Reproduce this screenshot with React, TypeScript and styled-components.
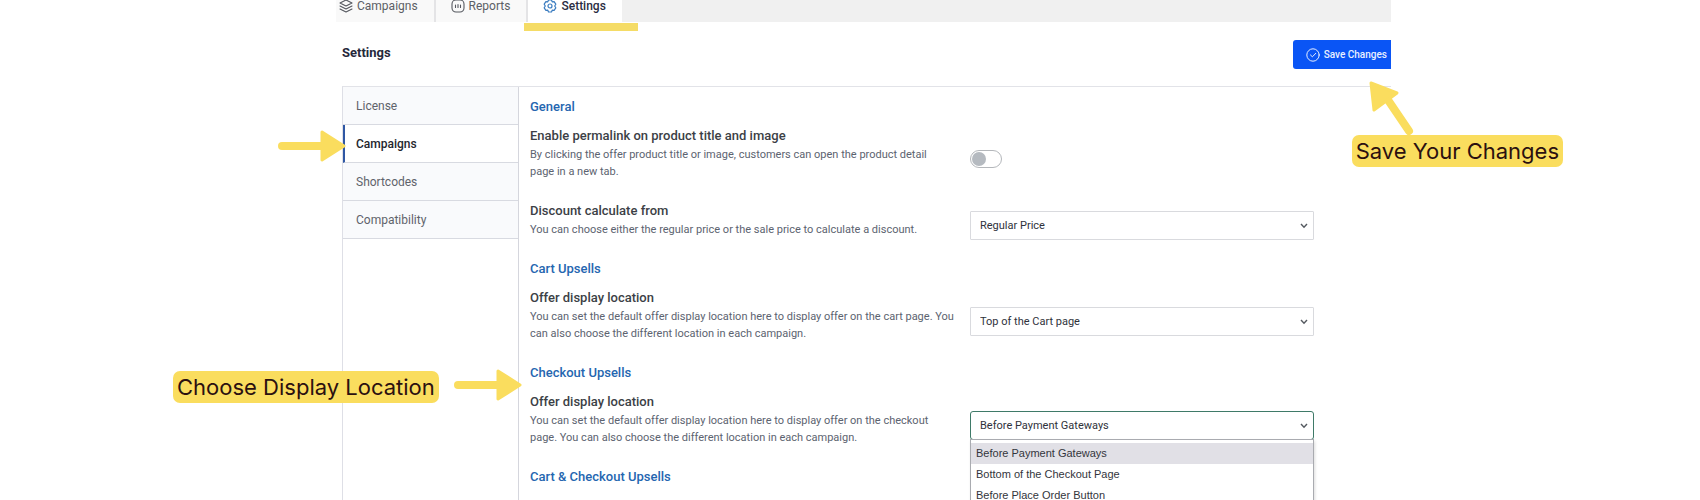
import React from "react";
import styled, { createGlobalStyle } from "styled-components";

const GlobalStyle = createGlobalStyle`
  * { box-sizing: border-box; }
  body { margin: 0; background: #fff; font-family: Roboto, "Liberation Sans", sans-serif; }
  h1, h2, h3, p, ul { margin: 0; padding: 0; }
`;

const Page = styled.main`
  height: 100vh;
  overflow: hidden;
  background: #fff;
`;

const Frame = styled.div`
  display: flow-root;
  position: relative;
  margin: 0 309px 0 336px;
`;

const TabBar = styled.nav`
  display: flex;
  height: 32px;
  margin-top: -10px;
  background: #f0f0f0;
`;

const Tab = styled.a<{ $active?: boolean; $first?: boolean }>`
  display: flex;
  align-items: center;
  gap: 4px;
  padding: 0 16px 0 ${(p) => (p.$first ? 3 : 15)}px;
  border-right: 2px solid ${(p) => (p.$active ? "#f0f0f0" : "#e4e4e6")};
  background: ${(p) => (p.$active ? "#fff" : "#f9f9f9")};
  color: ${(p) => (p.$active ? "#2b2d42" : "#5c5f66")};
  font-size: 12px;
  font-weight: ${(p) => (p.$active ? 500 : 400)};
  text-decoration: none;
  svg { color: ${(p) => (p.$active ? "#3a7cc0" : "#55585f")}; }
`;

const Header = styled.header`
  display: flex;
  align-items: center;
  justify-content: space-between;
  padding: 18px 0 17px 6px;
`;

const PageTitle = styled.h1`
  padding-bottom: 3px;
  color: #26283a;
  font-size: 13px;
  line-height: 20px;
  font-weight: 700;
`;

const SaveButton = styled.button`
  display: flex;
  align-items: center;
  gap: 4px;
  height: 29px;
  padding: 0 4px 0 13px;
  border: 0;
  border-radius: 3px 0 0 3px;
  background: #0a55f5;
  color: #e8f0ff;
  font: 500 10px Roboto, sans-serif;
`;

const Panel = styled.div`
  display: flex;
  margin-left: 6px;
  border-top: 1px solid #e2e3e8;
  border-left: 1px solid #dedfe6;
`;

const Sidebar = styled.nav`
  flex: none;
  width: 175px;
`;

const SideLink = styled.a<{ $active?: boolean }>`
  display: flex;
  align-items: center;
  height: 38px;
  padding-left: ${(p) => (p.$active ? 11 : 13)}px;
  border-left: ${(p) => (p.$active ? "2px solid #2f57a4" : "0")};
  border-bottom: 1px solid #d8dae1;
  background: ${(p) => (p.$active ? "#fff" : "#f9fafc")};
  color: ${(p) => (p.$active ? "#24262e" : "#5f636b")};
  font-size: 12px;
  font-weight: ${(p) => (p.$active ? 500 : 400)};
  text-decoration: none;
`;

const Content = styled.div`
  display: flex;
  flex: 1;
  flex-direction: column;
  gap: 9px;
  padding: 10px 77px 0 11px;
  border-left: 1px solid #d5d6dd;
`;

const SectionTitle = styled.h2`
  color: #2566b0;
  font-size: 13px;
  line-height: 20px;
  font-weight: 500;
`;

const SettingRow = styled.div`
  display: grid;
  grid-template-columns: minmax(0, 1fr) 344px;
  align-items: center;
`;

const SettingText = styled.div`
  padding-bottom: 12px;
`;

const SettingTitle = styled.h3`
  color: #3c3f46;
  font-size: 13px;
  line-height: 20px;
  font-weight: 500;
`;

const SettingNote = styled.p`
  color: #5c6370;
  font-size: 11px;
  line-height: 17px;
  white-space: pre-line;
`;

const Toggle = styled.input`
  appearance: none;
  display: block;
  width: 32px;
  height: 18px;
  margin: 0;
  padding: 1px;
  border: 1px solid #b4b7bb;
  border-radius: 9px;
  background: #fff;
  &::before {
    content: "";
    display: block;
    width: 14px;
    height: 14px;
    border-radius: 50%;
    background: #b5bac0;
  }
  &:checked::before { margin-left: auto; background: #0a55f5; }
`;

const SelectBox = styled.div`
  position: relative;
`;

const Select = styled.select<{ $open?: boolean }>`
  appearance: none;
  display: block;
  width: 100%;
  height: 29px;
  padding: 0 30px 0 9px;
  border: 1px solid ${(p) => (p.$open ? "#3f7a68" : "#d9dade")};
  border-radius: ${(p) => (p.$open ? 3 : 1)}px;
  background: #fff;
  color: #2f323b;
  font: 400 11px Roboto, sans-serif;
`;

const SelectArrow = styled.svg`
  position: absolute;
  top: 12px;
  right: 6px;
  pointer-events: none;
`;

const OptionList = styled.ul`
  position: absolute;
  top: 28px;
  left: 0;
  right: 0;
  padding: 3px 0;
  border: 1px solid #a9abb0;
  background: #fff;
  list-style: none;
  box-shadow: 1px 2px 3px #0002;
`;

const OptionItem = styled.li<{ $selected?: boolean }>`
  padding-left: 5px;
  background: ${(p) => (p.$selected ? "#e1e0e6" : "#fff")};
  color: #33353c;
  font: 400 11px/21px "Liberation Sans", sans-serif;
`;

const Callout = styled.div`
  position: absolute;
  padding: 0 4px;
  border-radius: 7px;
  background: #fadd5e;
  color: #2b1010;
  font: 400 22px/32px Inter, sans-serif;
  white-space: nowrap;
`;

const SaveCallout = styled(Callout)`
  top: 135px;
  right: -172px;
`;

const LocationCallout = styled(Callout)`
  top: 371px;
  left: -163px;
`;

const TabMarker = styled.div`
  position: absolute;
  top: 23px;
  left: 188px;
  width: 114px;
  height: 8px;
  background: #f5dc66;
`;

const Arrow = styled.svg`
  position: absolute;
  fill: #fadd5e;
  stroke: #fadd5e;
  stroke-linecap: round;
  stroke-linejoin: round;
`;

const MenuArrow = styled(Arrow)`
  top: 130px;
  left: -59px;
`;

const LocationArrow = styled(Arrow)`
  top: 369px;
  left: 117px;
`;

const SaveArrow = styled(Arrow)`
  top: 80px;
  right: -26px;
`;

const ArrowShape = () => (
  <>
    <path d="M5 16H46" fill="none" strokeWidth="8" />
    <path d="M45 2L67 16L45 30Z" strokeWidth="3" />
  </>
);

const LayersIcon = () => (
  <svg width="14" height="14" viewBox="0 0 14 14" fill="none" stroke="currentColor" strokeWidth="1.1" strokeLinejoin="round" strokeLinecap="round">
    <path d="M7 1L13 4L7 7L1 4ZM1 7L7 10L13 7M1 10L7 13L13 10" />
  </svg>
);

const ReportIcon = () => (
  <svg width="14" height="14" viewBox="0 0 14 14" fill="none" stroke="currentColor" strokeWidth="1.1" strokeLinecap="round">
    <rect x="1" y="1" width="12" height="12" rx="4" />
    <path d="M4.5 6V8.5M7 5.5V8.5M9.5 6V8.5" />
  </svg>
);

const GearIcon = () => (
  <svg width="14" height="14" viewBox="0 0 14 14" fill="none" stroke="currentColor" strokeWidth="1.2" strokeLinejoin="round">
    <path d="M5.5 1H8.5L9.2 2.8L11.1 2.6L12.8 5.2L11.7 7L12.8 8.8L11.1 11.4L9.2 11.2L8.5 13H5.5L4.8 11.2L2.9 11.4L1.2 8.8L2.3 7L1.2 5.2L2.9 2.6L4.8 2.8Z" />
    <circle cx="7" cy="7" r="2" />
  </svg>
);

const CheckIcon = () => (
  <svg width="14" height="14" viewBox="0 0 14 14" fill="none" stroke="currentColor" strokeWidth="1" strokeLinecap="round" strokeLinejoin="round">
    <circle cx="7" cy="7" r="6.2" />
    <path d="M4.5 7L6.4 8.8L9.8 5.3" />
  </svg>
);

type SelectFieldProps = { id: string; options: string[]; open?: boolean };

const SelectField = ({ id, options, open }: SelectFieldProps) => (
  <SelectBox>
    <Select id={id} $open={open} defaultValue={options[0]}>
      {options.map((option) => (
        <option key={option}>{option}</option>
      ))}
    </Select>
    <SelectArrow width="8" height="6" viewBox="0 0 8 6" fill="none" stroke="#555a60" strokeWidth="1.4">
      <path d="M1 1L4 4.3L7 1" />
    </SelectArrow>
    {open && (
      <OptionList role="listbox" aria-labelledby={`${id}-label`}>
        {options.map((option, i) => (
          <OptionItem key={option} role="option" aria-selected={i === 0} $selected={i === 0}>
            {option}
          </OptionItem>
        ))}
      </OptionList>
    )}
  </SelectBox>
);

type SettingProps = { id: string; title: string; note?: string; children?: React.ReactNode };

const Setting = ({ id, title, note, children }: SettingProps) => (
  <SettingRow>
    <SettingText>
      <SettingTitle id={`${id}-label`}>
        {children ? <label htmlFor={id}>{title}</label> : title}
      </SettingTitle>
      {note && <SettingNote>{note}</SettingNote>}
    </SettingText>
    {children}
  </SettingRow>
);

export default function App() {
  return (
    <Page>
      <GlobalStyle />
      <Frame>
        <TabBar>
          <Tab href="#campaigns" $first><LayersIcon />Campaigns</Tab>
          <Tab href="#reports"><ReportIcon />Reports</Tab>
          <Tab href="#settings" $active><GearIcon />Settings</Tab>
        </TabBar>
        <Header>
          <PageTitle>Settings</PageTitle>
          <SaveButton type="button"><CheckIcon />Save Changes</SaveButton>
        </Header>
        <Panel>
          <Sidebar>
            <SideLink href="#license">License</SideLink>
            <SideLink href="#campaign-settings" $active>Campaigns</SideLink>
            <SideLink href="#shortcodes">Shortcodes</SideLink>
            <SideLink href="#compatibility">Compatibility</SideLink>
          </Sidebar>
          <Content>
            <SectionTitle>General</SectionTitle>
            <Setting
              id="permalink"
              title="Enable permalink on product title and image"
              note={"By clicking the offer product title or image, customers can open the product detail\npage in a new tab."}
            >
              <Toggle id="permalink" type="checkbox" />
            </Setting>
            <Setting
              id="discount"
              title="Discount calculate from"
              note="You can choose either the regular price or the sale price to calculate a discount."
            >
              <SelectField id="discount" options={["Regular Price"]} />
            </Setting>
            <SectionTitle>Cart Upsells</SectionTitle>
            <Setting
              id="cart-location"
              title="Offer display location"
              note={"You can set the default offer display location here to display offer on the cart page. You\ncan also choose the different location in each campaign."}
            >
              <SelectField id="cart-location" options={["Top of the Cart page"]} />
            </Setting>
            <SectionTitle>Checkout Upsells</SectionTitle>
            <Setting
              id="checkout-location"
              title="Offer display location"
              note={"You can set the default offer display location here to display offer on the checkout\npage. You can also choose the different location in each campaign."}
            >
              <SelectField
                id="checkout-location"
                open
                options={["Before Payment Gateways", "Bottom of the Checkout Page", "Before Place Order Button"]}
              />
            </Setting>
            <SectionTitle>Cart &amp; Checkout Upsells</SectionTitle>
            <Setting id="cart-offer" title="Create offer display" />
          </Content>
        </Panel>
        <TabMarker />
        <MenuArrow width="70" height="32" viewBox="0 0 70 32"><ArrowShape /></MenuArrow>
        <LocationArrow width="70" height="32" viewBox="0 0 70 32"><ArrowShape /></LocationArrow>
        <SaveArrow width="48" height="58" viewBox="0 0 48 58">
          <path d="M19 20L40 51" fill="none" strokeWidth="8" />
          <path d="M2 3L28 13L5 30Z" strokeWidth="3" />
        </SaveArrow>
        <SaveCallout>Save Your Changes</SaveCallout>
        <LocationCallout>Choose Display Location</LocationCallout>
      </Frame>
    </Page>
  );
}
